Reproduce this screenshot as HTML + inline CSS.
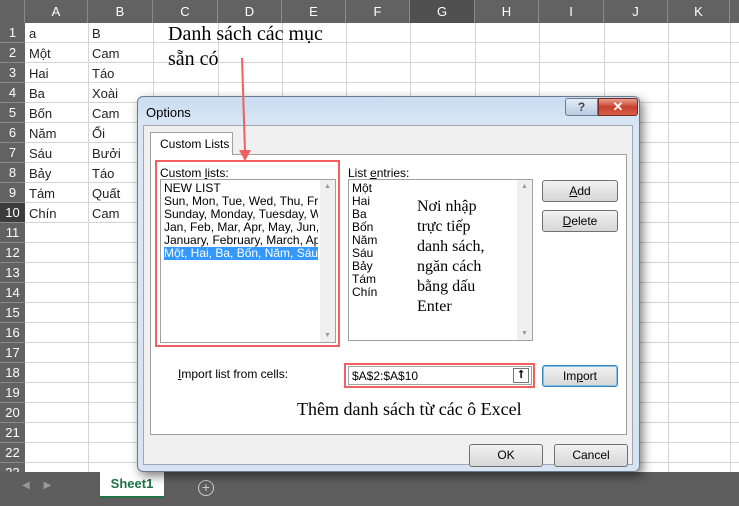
<!DOCTYPE html>
<html><head><meta charset="utf-8"><style>
*{margin:0;padding:0;box-sizing:border-box}
body{width:739px;height:506px;overflow:hidden;background:#fff;font-family:"Liberation Sans",sans-serif;position:relative}
.a{position:absolute}
.grid{left:25px;top:23px;width:714px;height:450px;background:repeating-linear-gradient(to bottom,transparent 0,transparent 19px,#d4d4d4 19px,#d4d4d4 20px)}
.vl{position:absolute;top:23px;width:1px;height:450px;background:#d4d4d4}
.colh{left:0;top:0;width:739px;height:23px;background:#626262}
.ch{position:absolute;top:0;height:23px;line-height:23px;color:#fff;font-size:13px;text-align:center;border-right:1px solid #8a8a8a}
.rowh{left:0;top:23px;width:25px;height:450px;background:#626262}
.rh{position:absolute;left:0;width:25px;height:20px;line-height:20px;color:#fff;font-size:13px;text-align:center;border-bottom:1px solid #8a8a8a}
.cell{position:absolute;font-size:13px;line-height:20px;color:#222}
.dlg{left:137px;top:96px;width:503px;height:376px;background:linear-gradient(#c9dcf1,#dbe7f5 30px,#d6e3f2);border:1px solid #6c7a8c;border-radius:6px;box-shadow:3px 4px 10px rgba(0,0,0,.5)}
.t{font-size:12px;color:#000}
.btn{position:absolute;border:1px solid #707070;border-radius:3px;background:linear-gradient(#f2f2f2,#e4e4e4 50%,#d6d6d6);font-size:12px;text-align:center;line-height:20px}
.ser{font-family:"Liberation Serif",serif;color:#000}
.lb{position:absolute;background:#fff;border:1px solid #a0a0a0}
.sb{position:absolute;right:0;top:0;width:15px;height:100%;background:#f0f0f0}
</style></head><body>
<div class="a grid"></div>
<div class="vl" style="left:88px"></div><div class="vl" style="left:153px"></div><div class="vl" style="left:218px"></div><div class="vl" style="left:282px"></div><div class="vl" style="left:346px"></div><div class="vl" style="left:410px"></div><div class="vl" style="left:475px"></div><div class="vl" style="left:539px"></div><div class="vl" style="left:604px"></div><div class="vl" style="left:668px"></div><div class="vl" style="left:730px"></div>
<div class="a colh">
<div class="ch" style="left:0;width:25px"></div>
<div class="ch" style="left:25px;width:63px">A</div><div class="ch" style="left:88px;width:65px">B</div><div class="ch" style="left:153px;width:65px">C</div><div class="ch" style="left:218px;width:64px">D</div><div class="ch" style="left:282px;width:64px">E</div><div class="ch" style="left:346px;width:64px">F</div><div class="ch" style="left:410px;width:65px;background:#505050">G</div><div class="ch" style="left:475px;width:64px">H</div><div class="ch" style="left:539px;width:65px">I</div><div class="ch" style="left:604px;width:64px">J</div><div class="ch" style="left:668px;width:62px">K</div>
</div>
<div class="a rowh">
<div class="rh" style="top:0">1</div><div class="rh" style="top:20px">2</div><div class="rh" style="top:40px">3</div><div class="rh" style="top:60px">4</div><div class="rh" style="top:80px">5</div><div class="rh" style="top:100px">6</div><div class="rh" style="top:120px">7</div><div class="rh" style="top:140px">8</div><div class="rh" style="top:160px">9</div><div class="rh" style="top:180px;background:#3c3c3c">10</div><div class="rh" style="top:200px">11</div><div class="rh" style="top:220px">12</div><div class="rh" style="top:240px">13</div><div class="rh" style="top:260px">14</div><div class="rh" style="top:280px">15</div><div class="rh" style="top:300px">16</div><div class="rh" style="top:320px">17</div><div class="rh" style="top:340px">18</div><div class="rh" style="top:360px">19</div><div class="rh" style="top:380px">20</div><div class="rh" style="top:400px">21</div><div class="rh" style="top:420px">22</div><div class="rh" style="top:440px">23</div>
</div>
<div class="cell" style="left:29px;top:24px">a<br>Một<br>Hai<br>Ba<br>Bốn<br>Năm<br>Sáu<br>Bảy<br>Tám<br>Chín</div>
<div class="cell" style="left:92px;top:24px">B<br>Cam<br>Táo<br>Xoài<br>Cam<br>Ổi<br>Bưởi<br>Táo<br>Quất<br>Cam</div>
<div class="a ser" style="left:168px;top:22px;font-size:20px;line-height:25px">Danh sách các mục<br>sẵn có</div>
<div class="a" style="left:0;top:472px;width:739px;height:34px;background:#5e5e5e"></div>
<div class="a" style="left:22px;top:480px;color:#999;font-size:10px">◀&nbsp;&nbsp;&nbsp;&nbsp;&nbsp;▶</div>
<div class="a" style="left:100px;top:472px;width:64px;height:26px;background:#fff;border-bottom:2px solid #217346;color:#217346;font-weight:bold;font-size:13px;text-align:center;line-height:24px">Sheet1</div>
<div class="a" style="left:198px;top:480px;width:16px;height:16px;border:1.5px solid #ccc;border-radius:50%;color:#ccc;font-size:14px;line-height:12px;text-align:center">+</div>

<div class="a dlg">
<div class="a t" style="left:8px;top:8px;font-size:13px">Options</div>
<div class="a" style="left:427px;top:1px;width:33px;height:18px;border:1px solid #6b7b90;border-radius:3px 0 0 3px;background:linear-gradient(#e4ecf6,#b9cbe1);text-align:center;font-size:12px;font-weight:bold;line-height:16px;color:#444">?</div>
<div class="a" style="left:460px;top:1px;width:40px;height:18px;border:1px solid #7a2a20;border-radius:0 3px 3px 0;background:linear-gradient(#e8a08f,#c7422e 50%,#d6604c);text-align:center;color:#fff;font-weight:bold;font-size:13px;line-height:16px">✕</div>
<div class="a" style="left:5px;top:28px;width:490px;height:340px;background:#f0f0f0;border:1px solid #a0a8b4"></div>
<div class="a" style="left:12px;top:35px;width:83px;height:23px;background:#fff;border:1px solid #a0a0a0;border-bottom:none;font-size:12px;line-height:22px;padding-left:9px;z-index:2">Custom Lists</div>
<div class="a" style="left:12px;top:57px;width:477px;height:281px;background:#fff;border:1px solid #a0a0a0"></div>
<div class="a" style="left:17px;top:63px;width:185px;height:187px;border:2px solid #f06060"></div>
<div class="a t" style="left:22px;top:69px">Custom <u>l</u>ists:</div>
<div class="lb" style="left:22px;top:82px;width:176px;height:164px">
<div class="t" style="position:absolute;left:3px;top:2px;line-height:13px;white-space:nowrap;width:154px;overflow:hidden">NEW LIST<br>Sun, Mon, Tue, Wed, Thu, Fri, Sat<br>Sunday, Monday, Tuesday, Wednesday<br>Jan, Feb, Mar, Apr, May, Jun, Jul<br>January, February, March, April<br><span style="background:#3399ff;color:#fff;display:block">Một, Hai, Ba, Bốn, Năm, Sáu, Bảy</span></div>
<div class="sb"><div style="font-size:7px;color:#999;text-align:center;margin-top:3px">▲</div><div style="position:absolute;bottom:3px;width:15px;font-size:7px;color:#999;text-align:center">▼</div></div></div>
<div class="a t" style="left:210px;top:69px">List <u>e</u>ntries:</div>
<div class="lb" style="left:210px;top:82px;width:185px;height:162px">
<div class="t" style="position:absolute;left:3px;top:2px;line-height:13px">Một<br>Hai<br>Ba<br>Bốn<br>Năm<br>Sáu<br>Bảy<br>Tám<br>Chín</div>
<div class="sb"><div style="font-size:7px;color:#999;text-align:center;margin-top:3px">▲</div><div style="position:absolute;bottom:3px;width:15px;font-size:7px;color:#999;text-align:center">▼</div></div></div>
<div class="a ser" style="left:279px;top:100px;font-size:16px;line-height:20px">Nơi nhập<br>trực tiếp<br>danh sách,<br>ngăn cách<br>bằng dấu<br>Enter</div>
<div class="btn" style="left:404px;top:83px;width:76px;height:22px"><u>A</u>dd</div>
<div class="btn" style="left:404px;top:113px;width:76px;height:22px"><u>D</u>elete</div>
<div class="a t" style="left:40px;top:270px"><u>I</u>mport list from cells:</div>
<div class="a" style="left:206px;top:266px;width:191px;height:25px;border:2px solid #f06060"></div>
<div class="lb" style="left:210px;top:269px;width:184px;height:19px"><span class="t" style="position:absolute;left:3px;top:2px">$A$2:$A$10</span>
<div style="position:absolute;right:2px;top:1px;width:16px;height:15px;border:1px solid #777;font-size:11px;font-weight:bold;text-align:center;line-height:13px">⭡</div></div>
<div class="btn" style="left:404px;top:268px;width:76px;height:22px;border-color:#3c7fb1;box-shadow:inset 0 0 0 1px #7ec3ef">Im<u>p</u>ort</div>
<div class="a ser" style="left:159px;top:302px;font-size:18px">Thêm danh sách từ các ô Excel</div>
<div class="btn" style="left:331px;top:347px;width:74px;height:23px;line-height:21px">OK</div>
<div class="btn" style="left:416px;top:347px;width:74px;height:23px;line-height:21px">Cancel</div>
</div>
<svg class="a" style="left:0;top:0" width="739" height="506"><line x1="242" y1="58" x2="245" y2="152" stroke="#f06060" stroke-width="2"/><polygon points="239,150 251,150 245,161" fill="#f06060"/></svg>
</body></html>
